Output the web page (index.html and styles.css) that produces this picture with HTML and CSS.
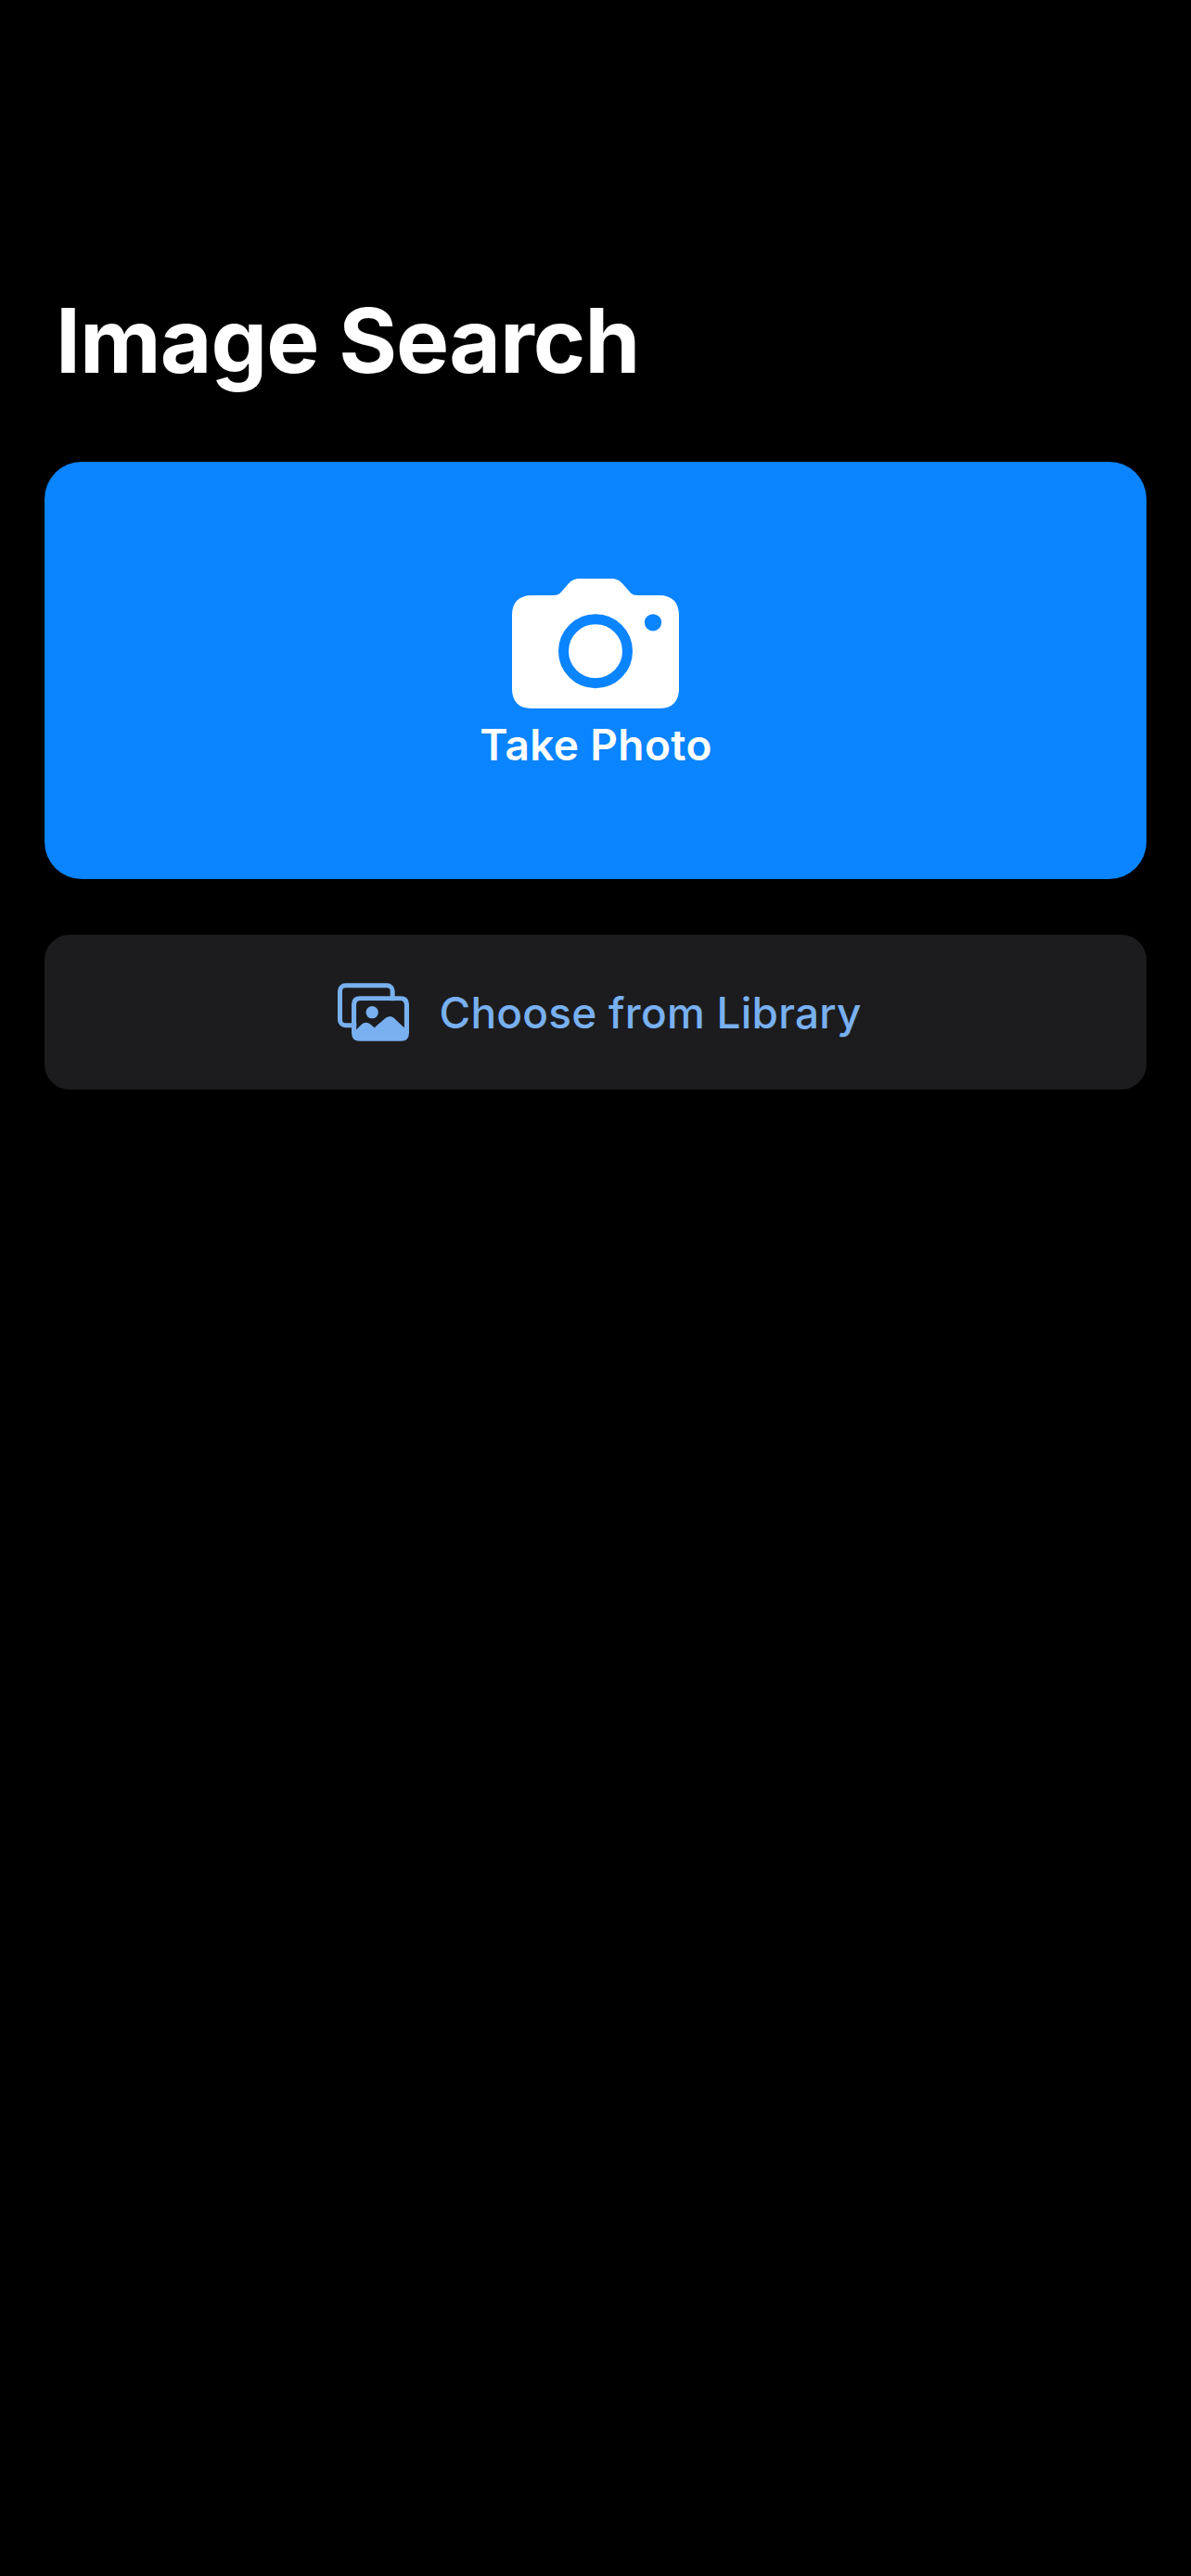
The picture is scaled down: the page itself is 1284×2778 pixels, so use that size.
FILE: index.html
```html
<!DOCTYPE html>
<html lang="en">
<head>
<meta charset="utf-8">
<title>Image Search</title>
<link rel="stylesheet" href="styles.css">
</head>
<body>
<main class="screen">
  <h1 class="title"><span>Image Search</span></h1>
  <button class="take-photo" type="button">
    <svg class="camera" viewBox="156 72 540 420" aria-hidden="true">
      <path fill="#fff" fill-rule="evenodd" d="M220 126H290C305 126 309 122 318 112L339 88C350 76 359 72 376 72H476C493 72 502 76 513 88L534 112C543 122 547 126 562 126H632C674 126 696 149 696 190V428C696 469 674 492 632 492H220C178 492 156 469 156 428V190C156 149 178 126 220 126Z"/>
      <circle cx="426" cy="306.500" r="103.500" fill="#fff" stroke="#0a84ff" stroke-width="33"/>
      <circle cx="612" cy="214" r="27.500" fill="#0a84ff"/>
    </svg>
    <span class="take-label">Take Photo</span>
  </button>
  <button class="library" type="button">
    <svg class="gallery" viewBox="42 61 231 189" aria-hidden="true">
      <rect x="49.500" y="69.500" width="170" height="129" rx="18" fill="none" stroke="#78b0f0" stroke-width="15"/>
      <path fill="#78b0f0" fill-rule="evenodd" d="M114 104H246Q273 104 273 131V222Q273 249 246 249H114Q87 249 87 222V131Q87 104 114 104ZM116 119Q103 119 103 132V211L121 194Q133 183 146 193L161 206L193 177Q209 162 226 176L257 205V132Q257 119 244 119Z"/>
      <path fill="#1c1c1e" d="M116 119Q103 119 103 132V211L121 194Q133 183 146 193L161 206L193 177Q209 162 226 176L257 205V132Q257 119 244 119Z"/>
      <circle cx="153.500" cy="156" r="20" fill="#78b0f0"/>
    </svg>
    <span class="library-label">Choose from Library</span>
  </button>
</main>
</body>
</html>
```
FILE: styles.css
```css
* { box-sizing: border-box; }
body {
  margin: 0;
  background: #000;
  font-family: Inter, "Liberation Sans", sans-serif;
}
.screen {
  display: flex;
  flex-direction: column;
  min-height: 2778px;
  padding: 307px 48px 0;
}
.title {
  margin: 0 0 71px;
  padding-left: 12px;
  height: 120px;
  color: #fff;
  font-size: 96px;
  line-height: 120px;
  font-weight: 700;
  letter-spacing: -0.95px;
  white-space: nowrap;
}
button {
  border: 0;
  font-family: inherit;
  font-size: 46px;
  line-height: 56px;
  white-space: nowrap;
}
.take-photo {
  display: flex;
  flex-direction: column;
  align-items: center;
  justify-content: flex-start;
  height: 450px;
  padding: 126px 0 0;
  border-radius: 40px;
  background: #0a84ff;
  color: #fff;
}
.camera { width: 180px; height: 140px; }
.take-label { margin: 11px 0 0 1px; font-weight: 600; letter-spacing: 0.35px; }
.library {
  display: flex;
  align-items: center;
  height: 167px;
  margin-top: 60px;
  padding: 0 0 0 316px;
  border-radius: 27px;
  background: #1c1c1e;
  color: #78b0f0;
}
.gallery { width: 77px; height: 63px; }
.library-label { margin-left: 32.5px; font-weight: 500; letter-spacing: 0.22px; }
```
